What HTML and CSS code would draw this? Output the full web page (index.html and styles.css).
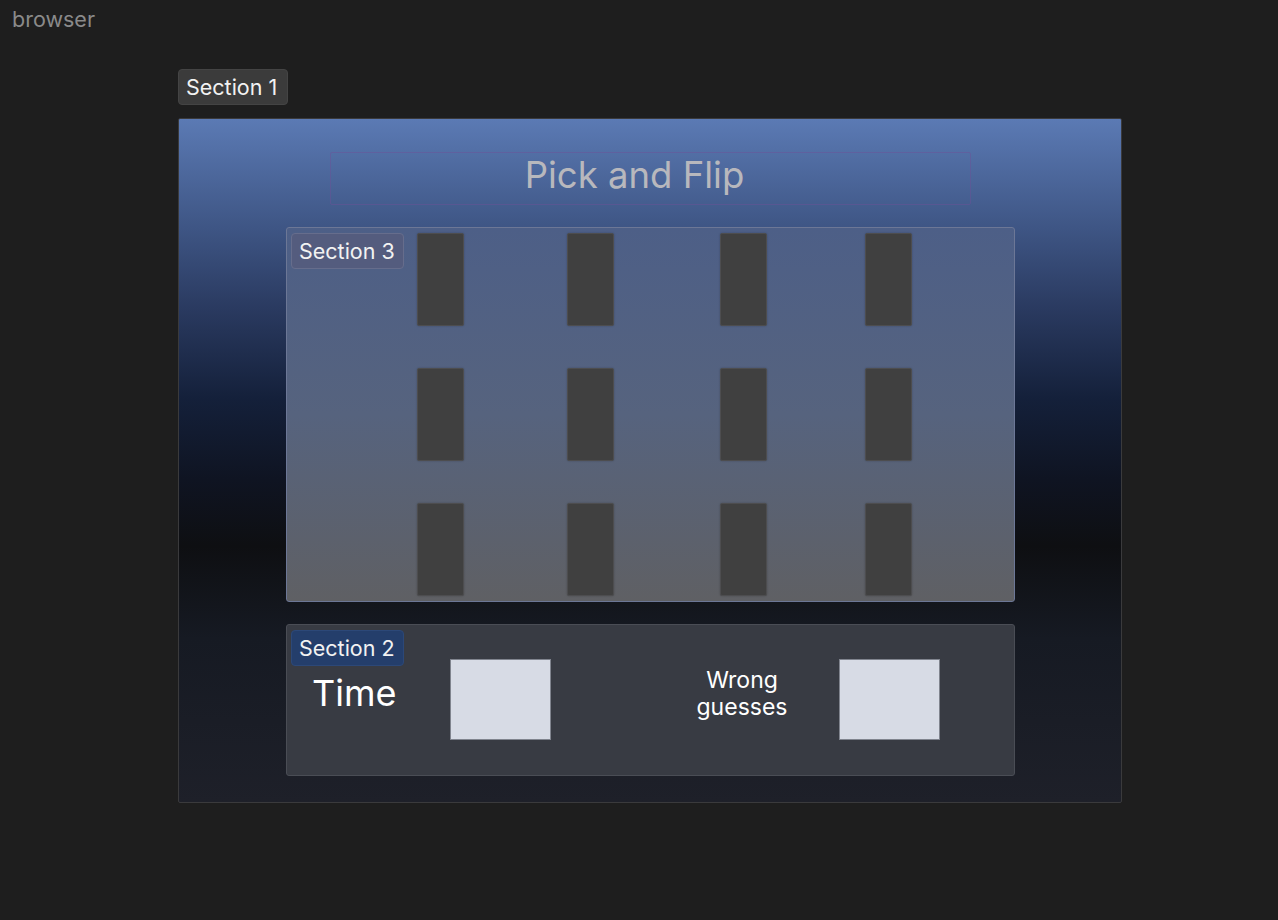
FILE: index.html
```html
<!DOCTYPE html>
<html>
<head>
<meta charset="utf-8">
<link rel="stylesheet" href="styles.css">
</head>
<body>
<div class="browser-label">browser</div>
<div class="section1-wrap">
  <div class="tag tag-1">Section 1</div>
  <div class="main">
    <div class="title-box">Pick and Flip</div>
    <div class="section3">
      <div class="tag tag-3">Section 3</div>
      <div class="cards">
        <div class="card"></div><div class="card"></div><div class="card"></div><div class="card"></div>
        <div class="card"></div><div class="card"></div><div class="card"></div><div class="card"></div>
        <div class="card"></div><div class="card"></div><div class="card"></div><div class="card"></div>
      </div>
    </div>
    <div class="section2">
      <div class="tag tag-2">Section 2</div>
      <div class="time-label">Time</div>
      <div class="value-box"></div>
      <div class="wrong-label">Wrong<br>guesses</div>
      <div class="value-box"></div>
    </div>
  </div>
</div>
</body>
</html>
```

FILE: styles.css
```css
html, body {
  margin: 0;
  padding: 0;
  background: #1e1e1e;
  font-family: Inter, "Noto Sans", "Liberation Sans", sans-serif;
  width: 1278px;
  height: 920px;
  overflow: hidden;
}

.browser-label {
  padding: 6px 0 0 12px;
  height: 26px;
  font-size: 21.5px;
  line-height: 26px;
  color: #8a8a8a;
}

.section1-wrap {
  margin: 37px 0 0 178px;
  width: 944px;
}

.tag {
  display: inline-block;
  box-sizing: border-box;
  height: 36px;
  padding: 0 7px;
  font-size: 21.5px;
  line-height: 35px;
  color: #f2f2f2;
  border-radius: 4px;
  border: 1px solid transparent;
  white-space: nowrap;
}

.tag-1 {
  background: #3b3b3b;
  border-color: #444;
  width: 110px;
}

.main {
  margin-top: 13px;
  box-sizing: border-box;
  width: 944px;
  height: 685px;
  border: 1px solid #3a3a3c;
  border-radius: 2px;
  background: linear-gradient(180deg,
    #5b7ab4 0px,
    #3e5584 110px,
    #2a3a60 190px,
    #14203a 280px,
    #0f1422 360px,
    #0e0f12 427px,
    #161a23 520px,
    #1e2029 684px);
  display: flex;
  flex-direction: column;
  align-items: flex-start;
  padding: 33px 0 0 0;
}

.title-box {
  margin-left: 151px;
  box-sizing: border-box;
  width: 641px;
  height: 53px;
  border: 1px solid rgba(110, 80, 150, 0.45);
  border-radius: 2px;
  display: flex;
  align-items: center;
  justify-content: center;
  font-size: 36.5px;
  color: #b8b8bd;
  padding: 0 32px 8px 0;
}

.section3 {
  position: relative;
  margin: 22px 0 0 107px;
  box-sizing: border-box;
  width: 729px;
  height: 375px;
  border: 1px solid #6c7796;
  border-radius: 3px;
  background: linear-gradient(180deg, #4d5f87 0%, #56637e 50%, #5f6064 100%);
  padding: 5px 0 0 130px;
}

.tag-3 {
  position: absolute;
  left: 4px;
  top: 5px;
  width: 113px;
  background: #545c7e;
  border-color: #666d8c;
}

.cards {
  display: grid;
  grid-template-columns: 150px 153px 145px 47px;
  grid-auto-rows: 93px;
  row-gap: 42px;
}

.card {
  box-sizing: border-box;
  width: 47px;
  background: #404040;
  border: 1px solid #4d4d4f;
  border-radius: 2px;
  box-shadow: 0 0 2px rgba(0, 0, 0, 0.25);
}

.section2 {
  position: relative;
  margin: 22px 0 0 107px;
  box-sizing: border-box;
  width: 729px;
  height: 152px;
  border: 1px solid #4a4d55;
  border-radius: 3px;
  background: #383b43;
  display: flex;
  align-items: center;
  padding: 0 0 2px 25px;
}

.tag-2 {
  position: absolute;
  left: 4px;
  top: 5px;
  width: 113px;
  height: 36px;
  background: #243e6b;
  border-color: #2c4878;
}

.time-label {
  font-size: 36px;
  color: #ffffff;
  width: 138px;
  margin-bottom: 12px;
}

.value-box {
  box-sizing: border-box;
  width: 101px;
  height: 81px;
  background: #d7dbe5;
  border: 1px solid #80848e;
}

.wrong-label {
  box-sizing: border-box;
  width: 288px;
  padding-left: 94px;
  text-align: center;
  font-size: 23px;
  line-height: 27px;
  color: #ffffff;
  margin-bottom: 10px;
}
```
